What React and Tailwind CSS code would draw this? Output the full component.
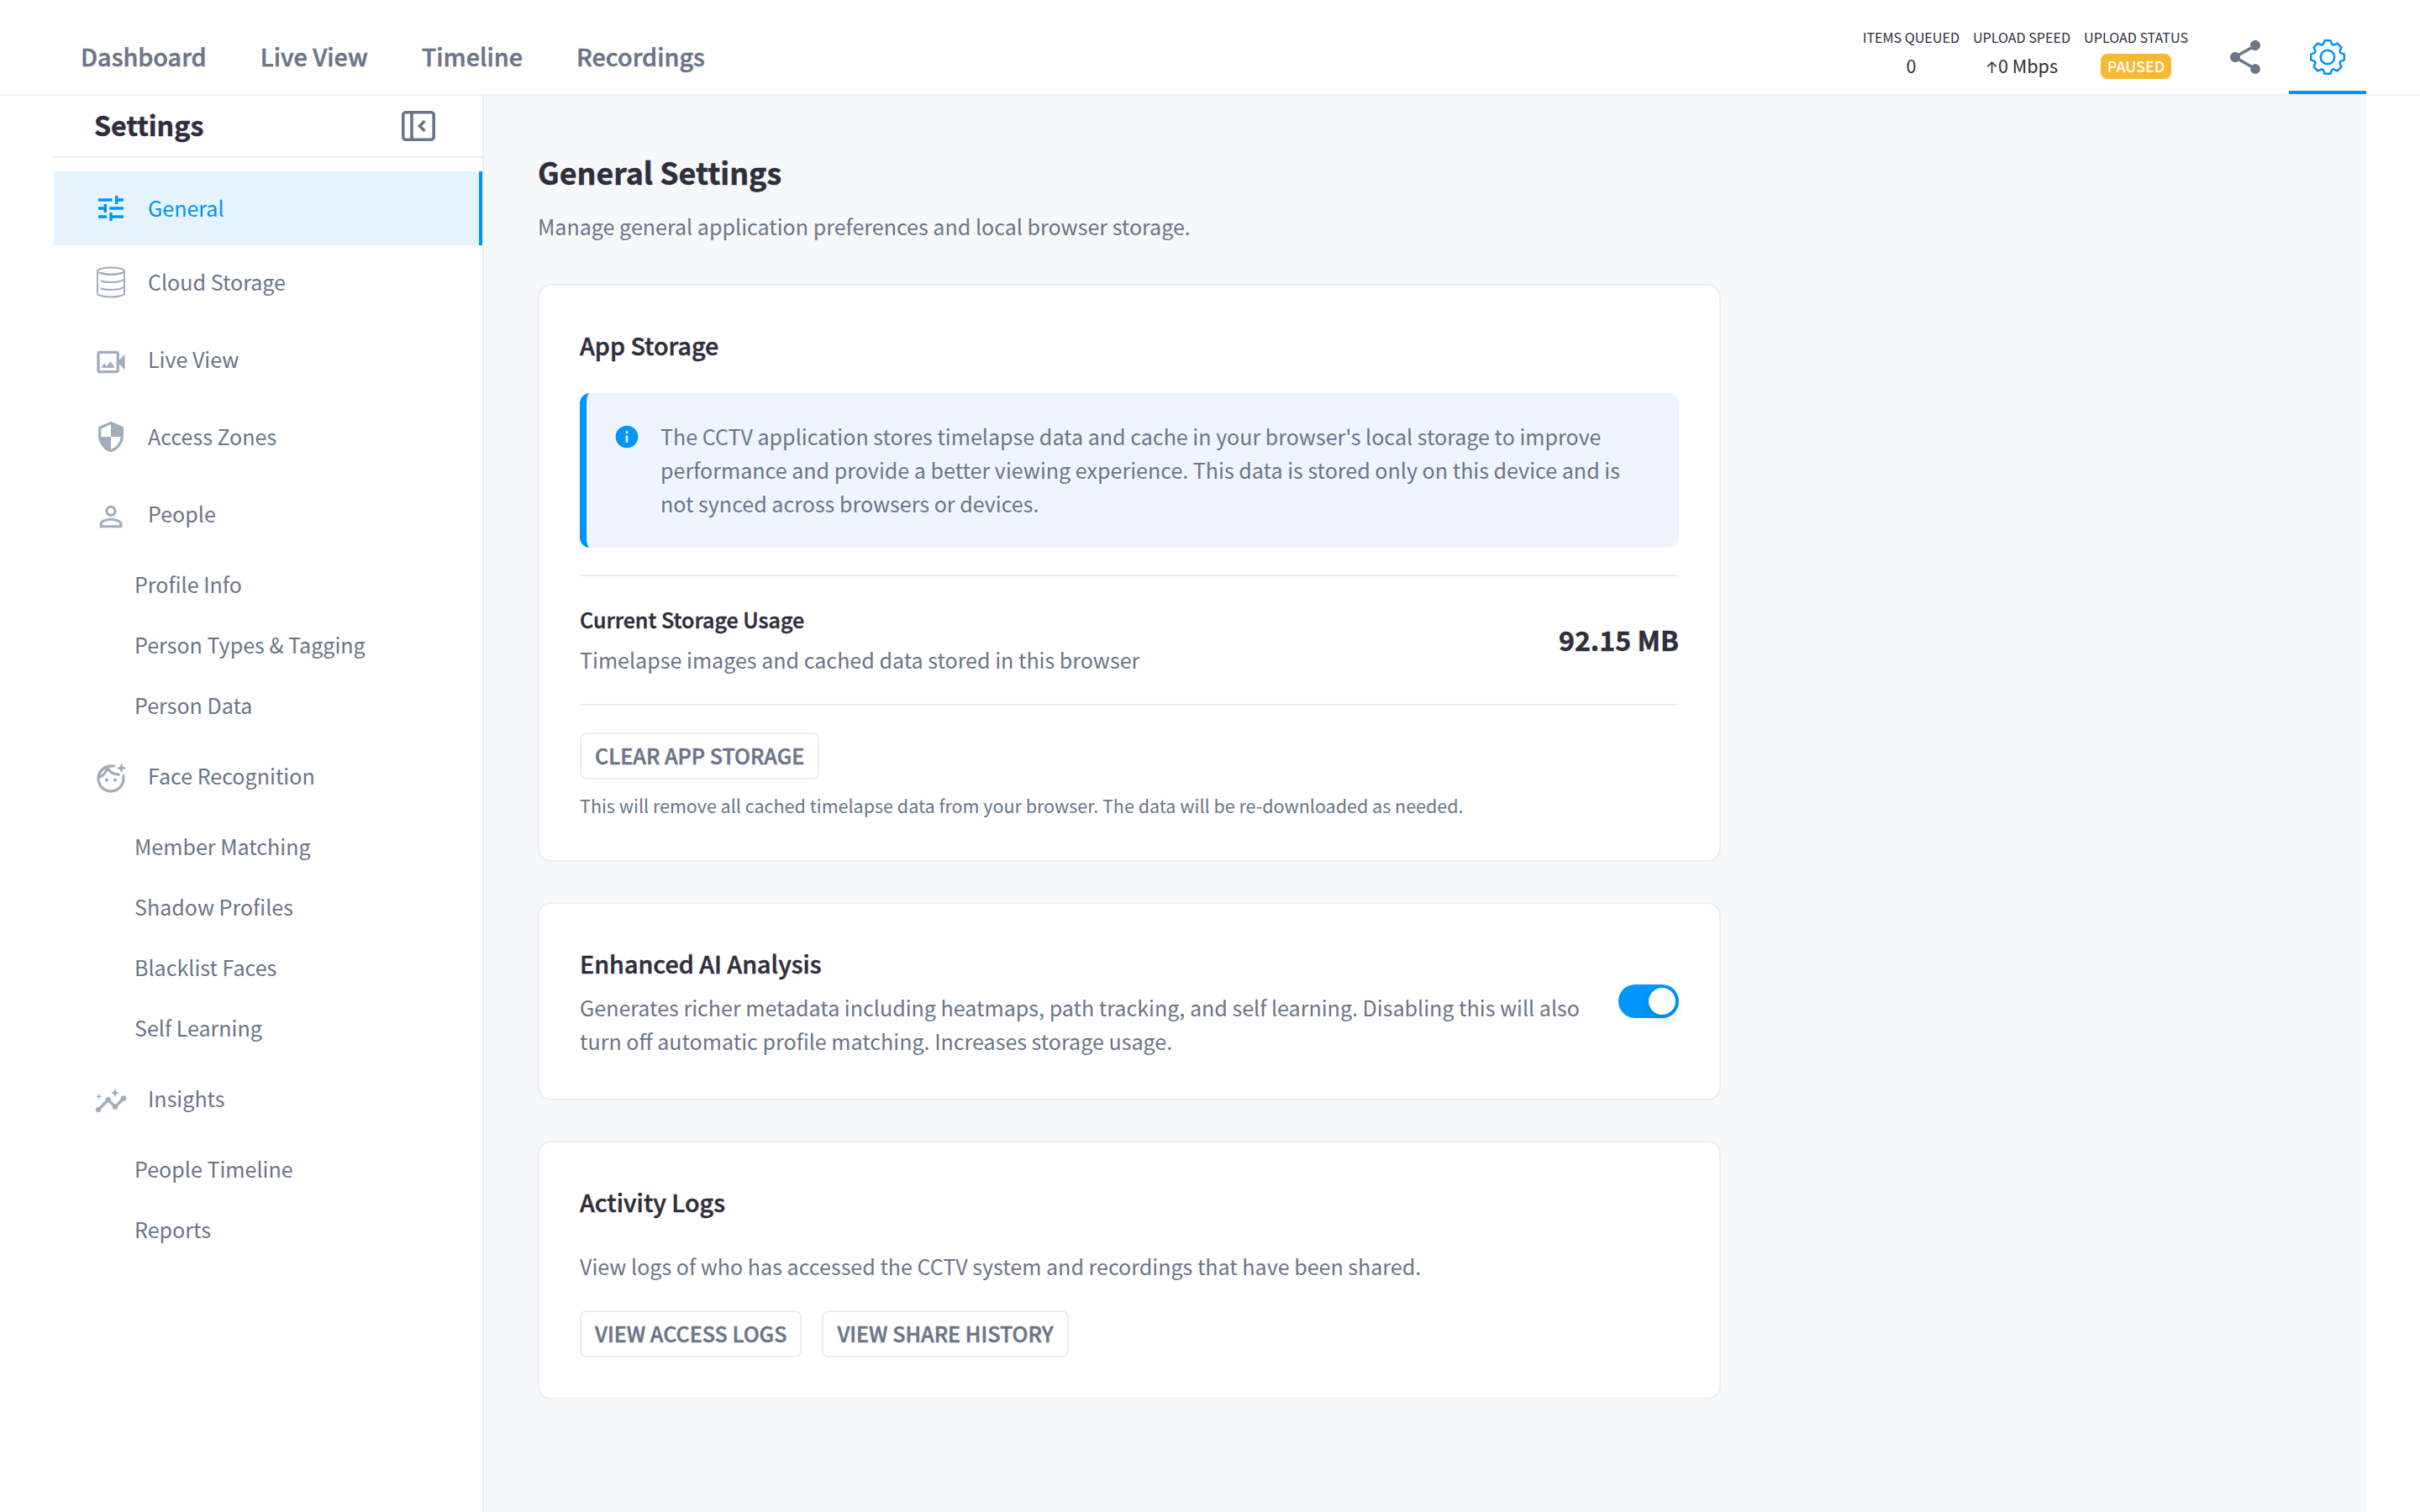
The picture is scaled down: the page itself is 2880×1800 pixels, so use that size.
import { useState } from 'react';
import { clsx } from 'clsx';
import {
  MdInfo,
  MdOutlineFaceRetouchingNatural,
  MdOutlineInsights,
  MdOutlineVideoCameraBack,
  MdPersonOutline,
  MdSecurity,
  MdShare,
  MdTune,
} from 'react-icons/md';

const IconDatabase = ({ className }) => (
  <svg viewBox="0 0 40 40" fill="none" stroke="currentColor" strokeWidth="2" strokeLinecap="round" className={className}>
    <ellipse cx="20" cy="6.5" rx="16" ry="4" />
    <path d="M4 6.5v27c0 2.2 7.2 4 16 4s16-1.8 16-4v-27" />
    <path d="M8.5 9.5c3 1 7 1.5 11.5 1.5 7 0 13-1.3 15.5-3.2" />
    <path d="M8.5 18.5c3 1 7 1.5 11.5 1.5 7 0 13-1.3 15.5-3.2" />
    <path d="M8.5 27.5c3 1 7 1.5 11.5 1.5 7 0 13-1.3 15.5-3.2" />
  </svg>
);

const IconCollapse = ({ className }) => (
  <svg viewBox="0 0 40 36" fill="none" stroke="currentColor" strokeWidth="3.6" className={className}>
    <rect x="1.8" y="1.8" width="36.4" height="32.4" rx="3" />
    <path d="M12 2v32" />
    <path d="M27.5 12l-6 6 6 6" />
  </svg>
);

// Eight identical teeth, each one turned 45° from the last
const tooth = [[-5.2, -15.2], [-3.4, -19.8], [3.4, -19.8], [5.2, -15.2]];
const gearPoints = Array.from({ length: 8 }, (_, i) => {
  const a = (i * Math.PI) / 4;
  return tooth
    .map(([x, y]) => `${(x * Math.cos(a) - y * Math.sin(a)).toFixed(2)},${(x * Math.sin(a) + y * Math.cos(a)).toFixed(2)}`)
    .join(' ');
}).join(' ');

const IconGear = ({ className }) => (
  <svg viewBox="-21 -21 42 42" fill="none" stroke="currentColor" strokeWidth="2.5" strokeLinejoin="round" className={className}>
    <polygon points={gearPoints} />
    <circle r="8.2" />
  </svg>
);

const tabs = ['Dashboard', 'Live View', 'Timeline', 'Recordings'];

const menu = [
  { label: 'General', Icon: MdTune },
  { label: 'Cloud Storage', Icon: IconDatabase },
  { label: 'Live View', Icon: MdOutlineVideoCameraBack, low: true },
  { label: 'Access Zones', Icon: MdSecurity },
  { label: 'People', Icon: MdPersonOutline, low: true, items: ['Profile Info', 'Person Types & Tagging', 'Person Data'] },
  {
    label: 'Face Recognition',
    Icon: MdOutlineFaceRetouchingNatural,
    low: true,
    items: ['Member Matching', 'Shadow Profiles', 'Blacklist Faces', 'Self Learning'],
  },
  { label: 'Insights', Icon: MdOutlineInsights, low: true, items: ['People Timeline', 'Reports'] },
];

function Header() {
  return (
    <header className="flex h-[114px] items-stretch justify-between border-b-2 border-[#ebeef1] bg-white px-16 pt-6">
      <nav className="flex">
        {tabs.map((tab) => (
          <a key={tab} href="#" className="flex items-center px-8 text-[28.75px] font-medium leading-10 text-[#6b7588] [-webkit-text-stroke:0.5px]">
            <span className="-mt-0.5">{tab}</span>
          </a>
        ))}
      </nav>
      <div className="flex">
        <div className="mr-[22px] flex gap-4 pt-1.5 text-center">
          <div>
            <div className="text-[16.1px] leading-7">ITEMS QUEUED</div>
            <div className="mt-0.5 text-[21.5px] leading-9">0</div>
          </div>
          <div>
            <div className="text-[16.1px] leading-7">UPLOAD SPEED</div>
            <div className="mt-0.5 text-[21.5px] leading-9">
              <span className="font-['Inter'] text-lg">↑</span>0 Mbps
            </div>
          </div>
          <div>
            <div className="text-[16.1px] leading-7">UPLOAD STATUS</div>
            <div className="mx-auto mt-1.5 flex h-[30px] w-[84px] items-center justify-center rounded-lg bg-[#f7b834] text-[17.9px] font-medium leading-7 text-white">
              <span className="-mt-0.5">PAUSED</span>
            </div>
          </div>
        </div>
        <button className="mr-1.5 flex w-[92px] items-center justify-center text-[#6b7588]">
          <MdShare className="size-12" />
        </button>
        <button className="flex w-[92px] items-center justify-center border-b-4 border-[#0095f8] pt-1 text-[#0095f8]">
          <IconGear className="size-[42px]" />
        </button>
      </div>
    </header>
  );
}

function Sidebar() {
  return (
    <aside className="w-[512px] shrink-0 border-r-2 border-[#ebeef1] bg-white">
      <div className="flex h-[74px] items-center justify-between border-b-2 border-[#ebeef1] pl-12 pr-14">
        <h2 className="-mt-1 text-[32.2px] font-bold leading-10 [-webkit-text-stroke:0.5px]">Settings</h2>
        <IconCollapse className="h-9 w-10 text-[#6b7588]" />
      </div>
      <nav className="pt-4">
        {menu.map(({ label, Icon, low, items }, i) => (
          <div key={label} className={clsx(i > 1 && 'mt-1')}>
            <a
              href="#"
              className={clsx(
                'flex h-[88px] items-center gap-6 pl-12 text-[25.07px]',
                i === 0 ? 'border-r-4 border-[#0095f8] bg-[#e5f3ff] text-[#0095f8]' : 'text-[#6b7588]'
              )}
            >
              <Icon className={clsx('size-10', low && 'mt-1.5', i > 0 && 'text-[#a1acbd]')} />
              <span className="-mt-0.5">{label}</span>
            </a>
            {items && (
              <ul className="pt-1">
                {items.map((item) => (
                  <li key={item} className="flex h-[72px] items-center pl-24 text-[25.07px] text-[#6b7588]">
                    <span className="-mt-0.5">{item}</span>
                  </li>
                ))}
              </ul>
            )}
          </div>
        ))}
      </nav>
    </aside>
  );
}

function Card({ children }) {
  return <section className="mb-12 w-[1408px] rounded-2xl border-2 border-[#ebeef1] bg-white p-12">{children}</section>;
}

function CardTitle({ children }) {
  return <h3 className="pb-0.5 text-[28.7px] font-medium leading-[46px] [-webkit-text-stroke:0.5px]">{children}</h3>;
}

function OutlineButton({ children }) {
  return (
    <button className="flex h-14 items-center rounded-lg border-2 border-[#ebeef1] bg-white px-4 text-[25.1px] font-medium text-[#6b7588] [-webkit-text-stroke:0.5px]">
      <span className="-mt-0.5">{children}</span>
    </button>
  );
}

function Toggle() {
  const [on, setOn] = useState(true);
  return (
    <button
      role="switch"
      aria-checked={on}
      onClick={() => setOn(!on)}
      className={clsx('flex h-10 w-[72px] shrink-0 items-center rounded-full px-1', on ? 'justify-end bg-[#0095f8]' : 'bg-[#ebeef1]')}
    >
      <span className="size-8 rounded-full bg-white shadow-[0_8px_12px_rgba(0,0,0,0.1)]" />
    </button>
  );
}

export default function App() {
  return (
    <div className="flex h-screen flex-col overflow-hidden bg-white font-['Noto_Sans_CJK_SC',sans-serif] text-[25.07px] leading-10 text-[#2f2e3c]">
      <Header />
      <div className="flex min-h-0 flex-1 px-16">
        <Sidebar />
        <main className="flex-1 bg-[#f7f8fa] pl-16 pt-[62px]">
          <h1 className="text-[35.8px] font-bold leading-[56px] [-webkit-text-stroke:0.5px]">General Settings</h1>
          <p className="mb-12 mt-[17px] pb-px text-[#6b7588]">
            Manage general application preferences and local browser storage.
          </p>

          <Card>
            <CardTitle>App Storage</CardTitle>
            <div className="mt-8 flex gap-6 rounded-xl border-l-8 border-[#0095f8] bg-[#eef5ff] px-8 pb-[33px] pt-[31px] text-[#6b7588]">
              <MdInfo className="mt-[5px] size-8 shrink-0 text-[#0095f8]" />
              <p>
                The CCTV application stores timelapse data and cache in your browser's local storage to improve
                performance and provide a better viewing experience. This data is stored only on this device and is not
                synced across browsers or devices.
              </p>
            </div>
            <div className="mt-8 flex items-center justify-between border-y-2 border-[#ebeef1] pb-[33px] pt-[31px]">
              <div>
                <h4 className="font-medium [-webkit-text-stroke:0.5px]">Current Storage Usage</h4>
                <p className="mt-2 text-[#6b7588]">Timelapse images and cached data stored in this browser</p>
              </div>
              <div className="text-[32.2px] font-bold [-webkit-text-stroke:0.5px]">92.15 MB</div>
            </div>
            <div className="mt-8 flex">
              <OutlineButton>CLEAR APP STORAGE</OutlineButton>
            </div>
            <p className="mt-[15px] pb-px text-[21.5px] leading-8 text-[#6b7588]">
              This will remove all cached timelapse data from your browser. The data will be re-downloaded as needed.
            </p>
          </Card>

          <Card>
            <div className="flex items-center justify-between gap-8">
              <div>
                <CardTitle>Enhanced AI Analysis</CardTitle>
                <p className="mt-[7px] pb-px text-[#6b7588]">
                  Generates richer metadata including heatmaps, path tracking, and self learning. Disabling this will
                  also turn off automatic profile matching. Increases storage usage.
                </p>
              </div>
              <Toggle />
            </div>
          </Card>

          <Card>
            <CardTitle>Activity Logs</CardTitle>
            <p className="mt-[31px] pb-px text-[#6b7588]">
              View logs of who has accessed the CCTV system and recordings that have been shared.
            </p>
            <div className="mt-8 flex gap-6">
              <OutlineButton>VIEW ACCESS LOGS</OutlineButton>
              <OutlineButton>VIEW SHARE HISTORY</OutlineButton>
            </div>
          </Card>
        </main>
      </div>
    </div>
  );
}
